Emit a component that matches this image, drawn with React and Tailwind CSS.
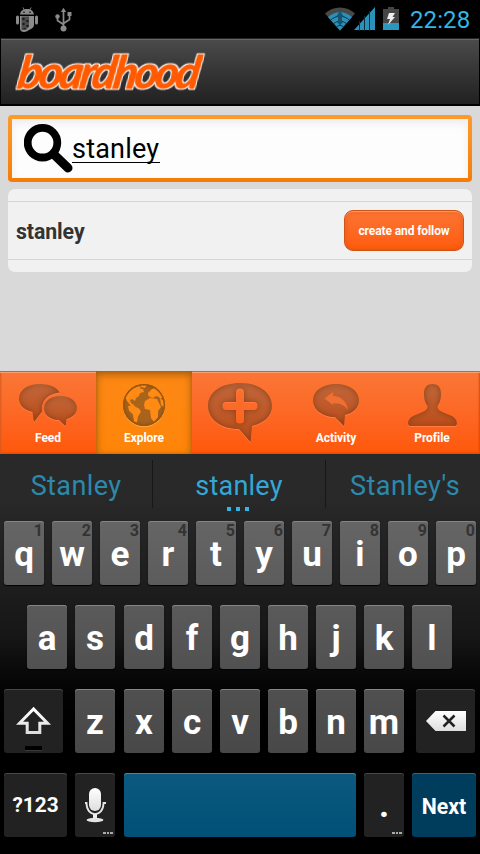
import React from "react";

function AndroidIcon() {
  return (
    <svg width="24" height="26" viewBox="0 0 24 26" className="shrink-0">
      <g fill="#8b8b8b">
        <path d="M5 7.500C5.200 5 7 3.200 8.600 2.600L7.400 .6l.7-.4 1.300 2.100c1.800-.5 3.600-.5 5.200 0L15.900 .2l.7.4-1.200 2C17 3.400 18.700 5 19 7.500z" />
        <rect x="1" y="8.500" width="3" height="9" rx="1.500" />
        <rect x="20" y="8.500" width="3" height="9" rx="1.500" />
        <path d="M5 9h14v9c0 2-2 3.500-4 4.500s-4 2.500-6 2.500-4-1-4-3.500z" />
      </g>
      <path d="M6.500 9.500h7.500v10l-3 3.500H6.500z" fill="#4b4b4b" />
      <path d="M7.500 11h2v2h-2zm4 2h2v2h-2zm-4 3h2v2h-2zm4 2h2v2h-2zm-3 3h2v1h-2z" fill="#171717" />
      <circle cx="9" cy="5.300" r=".8" />
      <circle cx="15" cy="5.300" r=".8" />
    </svg>
  );
}

function UsbIcon() {
  return (
    <svg width="18" height="26" viewBox="0 0 18 26" className="shrink-0" fill="none" stroke="#8b8b8b" strokeWidth="1.700">
      <path d="M9.500 4v17M3.500 10v3.500l6 4M15.500 7v5.500l-6 4" />
      <path d="M9.500 .8L6.900 5h5.200z" fill="#8b8b8b" stroke="none" />
      <circle cx="3.500" cy="9.500" r="2.200" fill="#8b8b8b" stroke="none" />
      <path d="M13.500 5h4v4h-4z" fill="#8b8b8b" stroke="none" />
      <circle cx="9.500" cy="21.500" r="3" fill="#8b8b8b" stroke="none" />
    </svg>
  );
}

function WifiIcon() {
  return (
    <svg width="30" height="24" viewBox="0 0 30 24" className="shrink-0">
      <path d="M0 6.500C8-1.500 22-1.500 30 6.500L15 23.500z" fill="#484848" />
      <path d="M3 10C10 3.500 20 3.500 27 10L15 23.500z" fill="#2b91ba" />
      <g fill="none" stroke="#0c3445" strokeWidth="1">
        <path d="M5.500 13.200C11 8 19 8 24.500 13.200M8.700 16.700C12.500 13.300 17.500 13.300 21.300 16.700M11.500 19.800C13.500 18 16.500 18 18.500 19.800" />
      </g>
      <path d="M15 4l3.500 5H17v6h1l-3 3.500-3-3.500h1V9h-1.500z" fill="#165570" />
    </svg>
  );
}

function SignalIcon() {
  return (
    <svg width="22" height="24" viewBox="0 0 22 24" className="shrink-0">
      <path d="M0 23L21 0v23z" fill="#2b91ba" />
      <path d="M5.500 14v10M10.500 9v15M15.500 4v20" stroke="#082f3e" strokeWidth="1" />
    </svg>
  );
}

function BatteryIcon() {
  return (
    <svg width="16" height="24" viewBox="0 0 16 24" className="shrink-0">
      <path d="M5 0h6v2h5v21H0V2h5z" fill="#454545" />
      <path d="M0 16h16v7H0z" fill="#2b96c0" />
      <path d="M6 6h6l-2.500 4H12l-7 8 2-6H4z" fill="#eee" />
    </svg>
  );
}

function StatusBar() {
  return (
    <div className="flex h-[38px] shrink-0 items-start bg-black">
      <div className="flex gap-[15px] pl-[15px] pt-[7px]">
        <AndroidIcon />
        <UsbIcon />
      </div>
      <div className="ml-auto flex pr-[9px]">
        <div className="flex pt-[7px]">
          <WifiIcon />
          <div className="-ml-px mr-[7px] flex"><SignalIcon /></div>
          <BatteryIcon />
        </div>
        <span className="ml-[11px] mt-[5px] w-[61px] whitespace-nowrap text-[24px] leading-[30px] tracking-[0.1px] text-[#33b5e5]">22:28</span>
      </div>
    </div>
  );
}

function Header() {
  return (
    <header className="flex h-[68px] shrink-0 items-start border border-b-2 border-black border-t-[#252525] bg-linear-to-b from-[#4b4b4b] to-[#212121] shadow-[inset_0_1px_0_#686868]">
      <svg width="220" height="64" viewBox="0 0 220 64" aria-label="boardhood">
        <filter id="outline" x="-5%" y="-10%" width="110%" height="120%" colorInterpolationFilters="sRGB">
          <feMorphology in="SourceAlpha" operator="dilate" radius="1" result="fat" />
          <feFlood floodColor="#fff" />
          <feComposite in2="fat" operator="in" result="edge" />
          <feMerge><feMergeNode in="edge" /><feMergeNode in="SourceGraphic" /></feMerge>
        </filter>
        <text
          x="23"
          y="49.500"
          transform="skewX(-9)"
          textLength="182"
          lengthAdjust="spacing"
          filter="url(#outline)"
          className="fill-[#ff5a00] stroke-[#ff5a00] font-['Lato'] text-[45px] font-bold italic [stroke-linejoin:round] [stroke-width:0.8px]"
        >
          boardhood
        </text>
      </svg>
    </header>
  );
}

function SearchIcon() {
  return (
    <svg width="49" height="49" viewBox="0 0 49 49" className="shrink-0" fill="none" stroke="#000">
      <circle cx="18.500" cy="18.700" r="14.800" strokeWidth="7.800" />
      <path d="M30 30.500L44 44" strokeWidth="9" strokeLinecap="round" />
    </svg>
  );
}

function SearchField() {
  return (
    <div className="h-[67px] rounded-[4px] bg-linear-to-b from-[#fd9b2a] to-[#f57c05] p-1">
      <div className="flex h-[59px] bg-[#fdfdfd] pl-3 pt-[5px] shadow-[inset_0_4px_8px_#ededed]">
        <SearchIcon />
        <div className="-ml-px mt-[7px] h-[32px] border-b border-black text-[27px] leading-[36px] text-black">
          <span className="inline-block w-[88px] tracking-[0.2px]">stanley</span>
        </div>
      </div>
    </div>
  );
}

function Results() {
  return (
    <div className="mt-[7px] h-[83px] rounded-[7px] bg-[#f1f1f1] py-3">
      <div className="flex h-[59px] items-center justify-between border-y border-[#d6d6d6] pl-2 pr-2">
        <span className="pt-[2px] text-[21.300px] font-bold tracking-[-0.1px] text-[#333]">stanley</span>
        <button className="h-[41px] w-[120px] rounded-[9px] border border-[#cf5315] bg-linear-to-b from-[#fb7432] to-[#ff5b08] text-[12px] font-bold tracking-[-0.1px] text-white shadow-[inset_0_1px_1px_#ff9e70,inset_0_0_4px_#d9540f]">
          create and follow
        </button>
      </div>
    </div>
  );
}

const glyph = "drop-shadow-[0_1px_0_#ff7c42]";

function IconPaint() {
  return (
    <svg width="0" height="0" className="absolute">
      <defs>
        <linearGradient id="tab-shade" x1="0" y1="0" x2="0" y2="1">
          <stop offset="0" stopColor="#c0673b" />
          <stop offset="1" stopColor="#bd4d1a" />
        </linearGradient>
        <linearGradient id="key-white" x1="0" y1="0" x2="0" y2="1">
          <stop offset="0" stopColor="#fff" />
          <stop offset="1" stopColor="#dedede" />
        </linearGradient>
        <filter id="inner" x="-5%" y="-5%" width="110%" height="110%" colorInterpolationFilters="sRGB">
          <feComponentTransfer in="SourceAlpha" result="inv"><feFuncA type="linear" slope="-1" intercept="1" /></feComponentTransfer>
          <feGaussianBlur in="inv" stdDeviation="3" result="blur" />
          <feFlood floodColor="#7d3b13" floodOpacity=".85" />
          <feComposite in2="blur" operator="in" />
          <feComposite in2="SourceAlpha" operator="in" result="shade" />
          <feMerge><feMergeNode in="SourceGraphic" /><feMergeNode in="shade" /></feMerge>
        </filter>
      </defs>
    </svg>
  );
}

function FeedIcon() {
  return (
    <svg width="58" height="43" viewBox="0 0 58 43" className={glyph} fill="url(#tab-shade)">
      <path filter="url(#inner)" d="M21 0C32 0 38 4 40.500 8.500 29 9.500 21.500 17 23 27.500L15 38 13.500 28C5 26 0 21 0 14.500 0 6 9 0 21 0z" />
      <path filter="url(#inner)" d="M41.500 12C51 12 58 17 58 24c0 5-4 9-10.500 11L46.500 42 40 36C31 35.500 25 31 25 24c0-7 7-12 16.500-12z" />
    </svg>
  );
}

function ExploreIcon() {
  return (
    <svg width="43" height="43" viewBox="0 0 43 43" className="drop-shadow-[0_1px_0_#ffa63d]">
      <circle cx="21" cy="21" r="21" fill="#a9641c" filter="url(#inner)" />
      <g fill="#ff8a14">
        <path d="M4 10C7 6 10 3.500 14 2l4 .5-1 2 3 .5 1 3-4 1-1 3-3 2-1 3-3-2-2 1 1 3 3 2 1 2-4-1-4-5-2-4z" />
        <path d="M5 22l5-.5 6 3 2 3-3 5-1 6-3-1-1-7-4-4z" />
        <path d="M25 9l4-4 3-1 6 5 2 4-3 2-1-2-3-1-3 2-3-1-2-2z" />
        <path d="M22 17l5-3 7 1 4 8-3 4v6l-4 5-3-4-1-8-5-1-1-4z" />
        <path d="M37 14l4 3v6l-3-2zM18 1l6 0-2 3-4-1z" />
      </g>
      <circle cx="21" cy="21" r="20.300" fill="none" stroke="#99570d" strokeWidth="1.400" />
    </svg>
  );
}

function AddIcon() {
  return (
    <svg width="64" height="60" viewBox="0 0 64 60" className={glyph} fill="url(#tab-shade)">
      <path filter="url(#inner)" fillRule="evenodd" d="M32 0C50 0 64 9 64 23c0 10-8 17-20 20L42.500 59 31 46C14 46 0 37 0 23S14 0 32 0zM28 9v10H18q-3.500 0-3.500 4t3.500 4h10v10q0 3.500 4 3.500t4-3.500V27h10q3.500 0 3.500-4t-3.500-4H36V9q0-3.500-4-3.500t-4 3.500z" />
    </svg>
  );
}

function ActivityIcon() {
  return (
    <svg width="46" height="43" viewBox="0 0 46 43" className={glyph} fill="url(#tab-shade)">
      <path filter="url(#inner)" d="M23 0c13 0 23 7 23 16.500 0 7-6 12.500-14 14.500L31 42 22 33C10 33 0 26 0 16.500S10 0 23 0z" />
      <path fill="#f06f33" d="M11.500 14.500L20 8v4c8 0 14 6 15 14-4-6-9-7-15-6.500V21z" />
    </svg>
  );
}

function ProfileIcon() {
  return (
    <svg width="49" height="43" viewBox="0 0 49 43" className={glyph} fill="url(#tab-shade)">
      <path filter="url(#inner)" d="M24.500 0c6 0 8.500 4 8.500 10 0 5-1 9-3.500 12 0 4 2 5 8 7.500 8 2.500 11.500 5.500 11.500 10.500l-1.500 2h-46L0 40c0-5 3.500-8 11.500-10.500 6-2.500 8-3.500 8-7.500C17 19 16 15 16 10c0-6 2.500-10 8.500-10z" />
    </svg>
  );
}

function Tab({ label, icon, active }) {
  return (
    <div
      className={
        active
          ? "flex w-24 flex-col items-center bg-linear-to-b from-[#fd8815] to-[#ff8508] pt-[13px] shadow-[inset_0_3px_8px_#a25a0b,inset_0_0_3px_#c06d13]"
          : "flex w-24 flex-col items-center pt-[13px]"
      }
    >
      {icon}
      <span className="mt-[4px] text-[12px] font-bold leading-[14px] tracking-[-0.05px] text-white">{label}</span>
    </div>
  );
}

function TabBar() {
  return (
    <nav className="flex h-[83px] shrink-0 bg-linear-to-b from-[#fa7736] to-[#ff5706] shadow-[inset_0_1px_0_#d56026,inset_0_2px_0_#ff9e70,inset_1px_0_2px_#d55b20,inset_-1px_-1px_2px_#da4b05]">
      <Tab label="Feed" icon={<FeedIcon />} />
      <Tab label="Explore" icon={<ExploreIcon />} active />
      <div className="flex w-24 justify-center pt-3"><AddIcon /></div>
      <Tab label="Activity" icon={<ActivityIcon />} />
      <Tab label="Profile" icon={<ProfileIcon />} />
    </nav>
  );
}

function Suggestions() {
  return (
    <div className="flex h-[67px] text-[27px] leading-[32px] text-[#2c89ab]">
      <div className="w-[152px] pt-4 text-center tracking-[0.4px]">Stanley</div>
      <div className="mt-[6px] h-12 w-px bg-[#171717]" />
      <div className="relative w-[172px] pt-4 text-center tracking-[0.2px] text-[#33a7d5]">
        stanley
        <div className="absolute left-[74px] top-[53px] flex gap-[5px]">
          <i className="size-1 bg-[#33b5e5]" />
          <i className="size-1 bg-[#33b5e5]" />
          <i className="size-1 bg-[#33b5e5]" />
        </div>
      </div>
      <div className="mt-[6px] h-12 w-px bg-[#171717]" />
      <div className="grow pl-1 pt-4 text-center tracking-[0.5px]">Stanley's</div>
    </div>
  );
}

function Key({ letter, hint, tone }) {
  return (
    <div className={`relative flex h-16 w-10 shrink-0 items-center justify-center rounded-[3px] pt-[2px] text-[35px] font-bold leading-none text-white shadow-[inset_0_1px_0_#858585,0_1px_1px_#000] ${tone}`}>
      {letter}
      {hint && <span className="absolute right-[1px] top-[2px] text-[16px] leading-[16px] text-[#333]">{hint}</span>}
    </div>
  );
}

const dark = "flex h-16 shrink-0 items-center justify-center rounded-[3px] bg-[#222] shadow-[inset_0_1px_0_#484848]";

function MoreDots() {
  return (
    <div className="absolute bottom-[3px] right-[2px] flex gap-px">
      <i className="h-[2px] w-[3px] bg-[#aaa]" />
      <i className="h-[2px] w-[2px] bg-[#aaa]" />
      <i className="h-[2px] w-[3px] bg-[#aaa]" />
    </div>
  );
}

function Keyboard() {
  return (
    <section className="h-[400px] shrink-0 bg-linear-to-b from-[#292929] from-10% via-[#171717] via-45% to-black to-75%">
      <Suggestions />
      <div className="flex flex-col gap-5">
        <div className="flex gap-2 pl-1">
          {[..."qwertyuiop"].map((k, i) => (
            <Key key={k} letter={k} hint={String((i + 1) % 10)} tone="bg-linear-to-b from-[#656565] to-[#5c5c5c]" />
          ))}
        </div>
        <div className="flex pl-[27px]">
          <div className="mr-[9px] flex gap-2">
            {[..."as"].map((k) => <Key key={k} letter={k} tone="bg-linear-to-b from-[#5a5a5a] to-[#515151]" />)}
          </div>
          <div className="flex gap-2">
            {[..."dfghjkl"].map((k) => <Key key={k} letter={k} tone="bg-linear-to-b from-[#5a5a5a] to-[#515151]" />)}
          </div>
        </div>
        <div className="flex pl-1">
          <div className={`relative mr-3 w-[59px] ${dark}`}>
            <svg width="36" height="30" viewBox="0 0 36 30" fill="none" stroke="url(#key-white)" strokeWidth="3">
              <path d="M17.500 3L3.500 17.300h7.700v9.200h12.600v-9.200h7.700z" />
            </svg>
            <i className="absolute bottom-[2px] left-[21px] h-[5px] w-[17px] border-b border-[#3a3a3a] bg-black" />
          </div>
          <Key letter="z" tone="bg-linear-to-b from-[#505050] to-[#484848]" />
          <div className="ml-[9px] mr-3 flex gap-2">
            {[..."xcvbnm"].map((k) => <Key key={k} letter={k} tone="bg-linear-to-b from-[#505050] to-[#484848]" />)}
          </div>
          <div className={`w-[59px] ${dark}`}>
            <svg width="40" height="20" viewBox="0 0 40 20">
              <path d="M0 10L9.500 0H40v20H9.500z" fill="url(#key-white)" />
              <path d="M17.500 4.500l11 11m0-11l-11 11" stroke="#222" strokeWidth="2.500" />
            </svg>
          </div>
        </div>
        <div className="flex pl-1 text-white">
          <div className={`mr-2 w-[63px] pt-[2px] text-[20.800px] font-bold ${dark}`}>?123</div>
          <div className={`relative mr-[9px] w-10 ${dark}`}>
            <svg width="22" height="36" viewBox="0 0 22 36" className="-mr-px mb-px">
              <rect x="4" y="1" width="12" height="23" rx="6" fill="url(#key-white)" />
              <path d="M-.5 16h2c0 15 17 15 17 0H21" fill="none" stroke="#e6e6e6" strokeWidth="1.800" />
              <path d="M8 27h4v5H8z" fill="#eee" />
              <ellipse cx="10" cy="33" rx="8.500" ry="2.200" fill="#e4e4e4" />
            </svg>
            <MoreDots />
          </div>
          <div className="mr-2 h-16 w-[232px] rounded-[3px] bg-linear-to-b from-[#0c597f] to-[#005077] shadow-[inset_0_1px_0_#4c879f]" />
          <div className={`relative mr-2 w-10 pt-[2px] text-[35px] font-bold ${dark}`}>
            .
            <MoreDots />
          </div>
          <div className="flex h-16 w-16 items-center justify-center rounded-[3px] bg-[#003c5c] pt-[3px] text-[21.300px] font-bold shadow-[inset_0_1px_0_#326782]">Next</div>
        </div>
      </div>
    </section>
  );
}

export default function App() {
  return (
    <div className="flex h-[854px] w-[480px] flex-col overflow-hidden bg-[#d9d9d9] font-['Roboto',sans-serif]">
      <IconPaint />
      <StatusBar />
      <Header />
      <main className="grow px-2 pt-[9px]">
        <SearchField />
        <Results />
      </main>
      <TabBar />
      <Keyboard />
    </div>
  );
}
